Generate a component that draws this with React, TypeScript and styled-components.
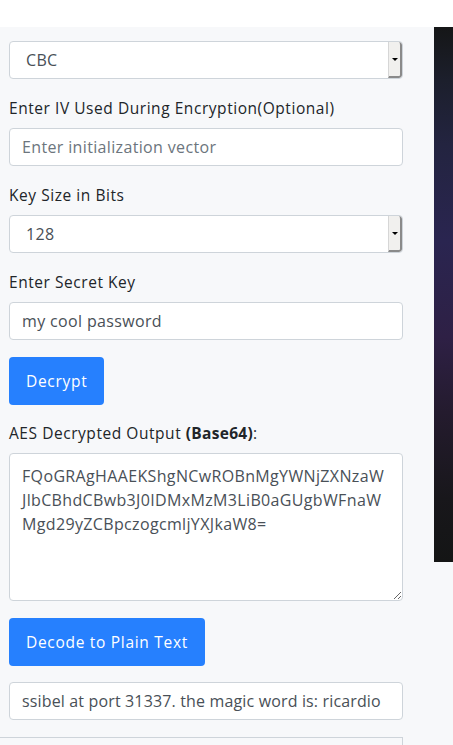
import React from "react";
import styled, { createGlobalStyle } from "styled-components";

const Global = createGlobalStyle`
  html, body { margin: 0; padding: 0; background: #ffffff; }
  body { font-family: "Open Sans", "Noto Sans", sans-serif; color: #212529; letter-spacing: 0.35px; }
  * { box-sizing: border-box; }
`;

const TopBar = styled.header`
  height: 27px;
  background: #ffffff;
`;

const Main = styled.div`
  display: flex;
  align-items: flex-start;
  background: #f7f8fa;
  min-height: 718px;
`;

const Column = styled.div`
  width: 434px;
  flex: none;
  padding: 14px 31px 0 9px;
  display: flex;
  flex-direction: column;
`;

const Aside = styled.aside`
  width: 19px;
  height: 535px;
  flex: none;
  background: linear-gradient(
    to bottom,
    #151617 0%,
    #1c1f2c 10%,
    #232440 22%,
    #2a2550 40%,
    #2e2045 58%,
    #241b2e 72%,
    #18171b 88%,
    #141515 100%
  );
`;

const Group = styled.div`
  display: flex;
  flex-direction: column;
  margin-bottom: 17px;
`;

const Label = styled.label`
  font-size: 15.5px;
  line-height: 24px;
  margin-bottom: 8px;
  color: #212529;
  letter-spacing: 0.55px;
  b { font-weight: 700; letter-spacing: 0.3px; }
`;

const SelectBox = styled.div`
  height: 38px;
  display: flex;
  align-items: stretch;
  background: #fff;
  border: 1px solid #ced4da;
  border-radius: 4px;
  overflow: hidden;
`;

const SelectValue = styled.span`
  flex: 1;
  display: flex;
  align-items: center;
  padding-left: 16px;
  font-size: 16px;
  color: #495057;
`;

const Spinner = styled.span`
  width: 14px;
  flex: none;
  background: #f1f0ee;
  border-left: 1px solid #d6d6d6;
  border-right: 2px solid #8a8a8a;
  border-bottom: 2px solid #8a8a8a;
  border-radius: 0 3px 3px 0;
  display: flex;
  align-items: center;
  justify-content: center;
  &::after {
    content: "";
    border-left: 3px solid transparent;
    border-right: 3px solid transparent;
    border-top: 3px solid #000;
  }
`;

const Input = styled.input<{ $spacing?: number }>`
  height: 38px;
  width: 100%;
  padding: 0 12px;
  border: 1px solid #ced4da;
  border-radius: 4px;
  background: #fff;
  font-family: inherit;
  font-size: 16px;
  letter-spacing: ${(p) => p.$spacing ?? 0.35}px;
  color: #495057;
  outline: none;
  &::placeholder { color: #6c757d; }
`;

const TextArea = styled.textarea`
  height: 148px;
  width: 100%;
  padding: 10px 12px 6px;
  border: 1px solid #ced4da;
  border-radius: 4px;
  background: #fff;
  font-family: inherit;
  font-size: 16px;
  line-height: 24px;
  letter-spacing: 0.35px;
  color: #495057;
  outline: none;
  word-break: break-all;
`;

const Button = styled.button`
  align-self: flex-start;
  height: 48px;
  padding: 0 17px;
  margin-bottom: 16px;
  border: none;
  border-radius: 4px;
  background: #2680fe;
  color: #fff;
  font-family: inherit;
  font-size: 15.5px;
  letter-spacing: 0.7px;
  cursor: pointer;
`;

const BottomCard = styled.div`
  margin-left: -9px;
  height: 20px;
  border-top: 1px solid #ced4da;
  border-right: 1px solid #ced4da;
  background: #f7f8fa;
`;

const output =
  "FQoGRAgHAAEKShgNCwROBnMgYWNjZXNzaW\nJlbCBhdCBwb3J0IDMxMzM3LiB0aGUgbWFnaW\nMgd29yZCBpczogcmljYXJkaW8=";

export default function App() {
  return (
    <>
      <Global />
      <TopBar />
      <Main>
        <Column>
          <Group>
            <SelectBox>
              <SelectValue>CBC</SelectValue>
              <Spinner />
            </SelectBox>
          </Group>
          <Group>
            <Label>Enter IV Used During Encryption(Optional)</Label>
            <Input placeholder="Enter initialization vector" />
          </Group>
          <Group>
            <Label>Key Size in Bits</Label>
            <SelectBox>
              <SelectValue>128</SelectValue>
              <Spinner />
            </SelectBox>
          </Group>
          <Group>
            <Label>Enter Secret Key</Label>
            <Input defaultValue="my cool password" />
          </Group>
          <Button>Decrypt</Button>
          <Group>
            <Label>
              AES Decrypted Output <b>(Base64)</b>:
            </Label>
            <TextArea defaultValue={output} />
          </Group>
          <Button>Decode to Plain Text</Button>
          <Group>
            <Input $spacing={0.15} defaultValue="ssibel at port 31337. the magic word is: ricardio" />
          </Group>
          <BottomCard />
        </Column>
        <Aside />
      </Main>
    </>
  );
}
